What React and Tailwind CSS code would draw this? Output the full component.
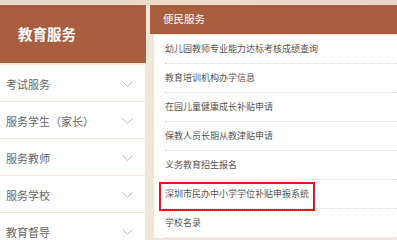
import React from 'react';

const leftMenu = ['考试服务', '服务学生（家长）', '服务教师', '服务学校', '教育督导'];

const services = [
  '幼儿园教师专业能力达标考核成绩查询',
  '教育培训机构办学信息',
  '在园儿童健康成长补贴申请',
  '保教人员长期从教津贴申请',
  '义务教育招生报名',
  '深圳市民办中小学学位补贴申报系统',
  '学校名录',
];

const Chevron = () => (
  <svg width="11" height="6" viewBox="0 0 11 6" fill="none" className="shrink-0">
    <path d="M0.5 0.5 L5.5 5.2 L10.5 0.5" stroke="#b4b0ab" strokeWidth="0.9" />
  </svg>
);

export default function App() {
  return (
    <div className="w-[397px] h-[240px] overflow-hidden bg-[#efe6d6] font-['Noto_Sans_CJK_SC','Noto_Sans',sans-serif]">
      <div className="h-[5px] bg-gradient-to-r from-[#ead8cb] via-[#e9ddcd] to-[#e4d8cb]" />
      <div className="flex gap-[4px]">
        {/* left menu */}
        <div className="w-[146px] shrink-0">
          <div className="h-[58px] bg-[#a95e40] flex items-center pl-[18px] text-white font-bold text-[14.5px] leading-none">
            教育服务
          </div>
          <div className="h-[2px] bg-[#f4e6d8]" />
          <ul className="w-[145px] bg-white">
            {leftMenu.map((item) => (
              <li
                key={item}
                className="h-[37px] border-b border-[#f1e7da] flex items-center justify-between pl-[6px] pr-[12px] pt-[2px] text-[11px] text-[#666]"
              >
                <span>{item}</span>
                <Chevron />
              </li>
            ))}
          </ul>
        </div>

        {/* right list */}
        <div className="flex-1">
          <div className="h-[29px] bg-[#a95e40] flex items-center pl-[13px] text-white text-[10.5px] leading-none">
            便民服务
          </div>
          <div className="h-[1px] bg-[#f2dfd2]" />
          <ul className="bg-white border-l-[4px] border-[#efe6d6]">
            {services.map((item, i) => (
              <li
                key={item}
                className="relative ml-[11px] h-[29px] border-b border-dotted border-[#d9d9d9] flex items-center text-[9px] text-[#555]"
              >
                <span>{item}</span>
                {i === 5 && (
                  <span className="absolute left-[-6px] top-[2px] w-[156px] h-[29px] border-2 border-[#e5171d]" />
                )}
              </li>
            ))}
          </ul>
        </div>
      </div>
    </div>
  );
}
